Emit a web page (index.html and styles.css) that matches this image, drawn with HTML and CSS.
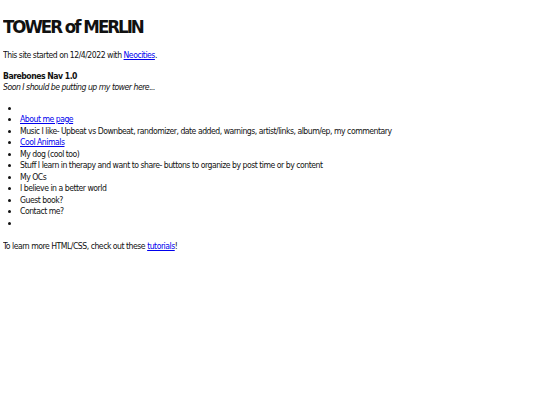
FILE: index.html
```html
<!DOCTYPE html>
<html>
<head>
<meta charset="utf-8">
<link rel="stylesheet" href="styles.css">
</head>
<body>
<h1 class="title">TOWER of MERLIN</h1>
<p class="text">This site started on 12/4/2022 with <a href="#">Neocities</a>.</p>
<p class="text"><b>Barebones Nav 1.0</b><br><i>Soon I should be putting up my tower here...</i></p>
<ul class="nav">
<li></li>
<li><a href="#">About me page</a></li>
<li>Music I like- Upbeat vs Downbeat, randomizer, date added, warnings, artist/links, album/ep, my commentary</li>
<li><a href="#">Cool Animals</a></li>
<li>My dog (cool too)</li>
<li>Stuff I learn in therapy and want to share- buttons to organize by post time or by content</li>
<li>My OCs</li>
<li>I believe in a better world</li>
<li>Guest book?</li>
<li>Contact me?</li>
<li></li>
</ul>
<p class="text">To learn more HTML/CSS, check out these <a href="#">tutorials</a>!</p>
</body>
</html>
```
FILE: styles.css
```css
body {
  margin: 3px;
  font-family: "DejaVu Sans Condensed", "DejaVu Sans", sans-serif;
  font-size: 8.6px;
  letter-spacing: -0.48px;
  line-height: 11.5px;
  color: #111;
  background: #fff;
}
.title {
  font-size: 18.5px;
  letter-spacing: -2px;
  line-height: 24px;
  margin: 12px 0 11px;
}
.text {
  margin: 0 0 9px;
}
.nav {
  margin: 9px 0 12px;
  padding-left: 17px;
}
a { color: #0000ee; }
```
